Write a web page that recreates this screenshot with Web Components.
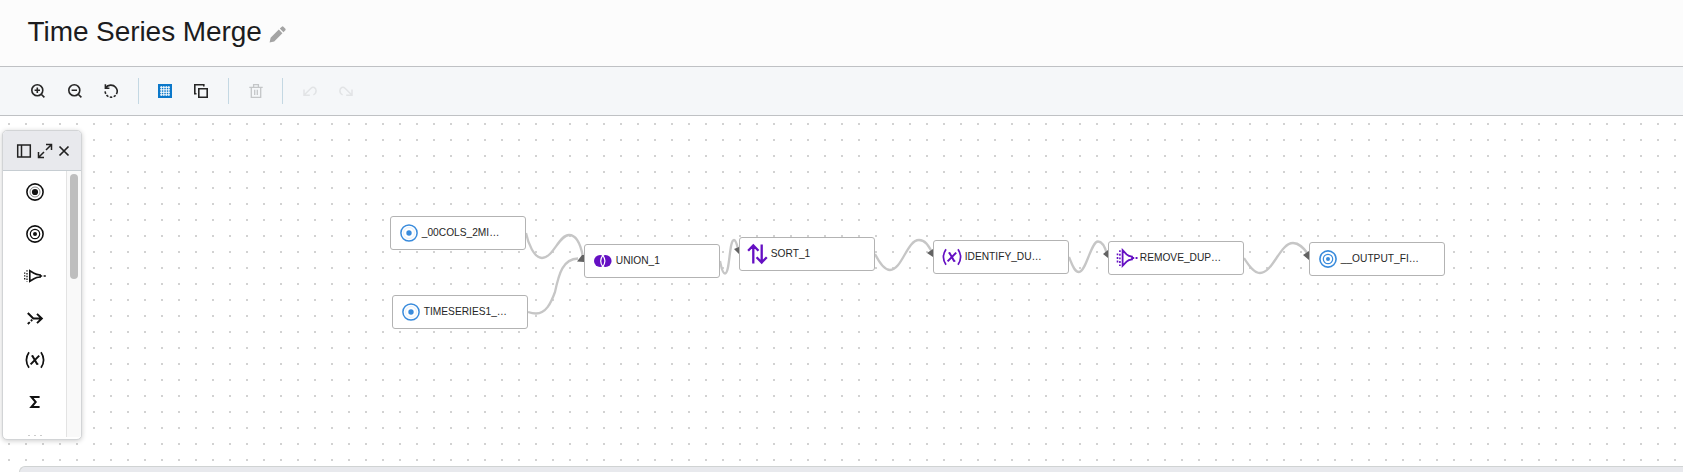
<!DOCTYPE html>
<html lang="en"><head><meta charset="utf-8"><title>Time Series Merge</title>
<style>html,body{margin:0;height:100%;overflow:hidden}body{font-family:"Liberation Sans",Arial,sans-serif;color:#1c1c1e}</style></head>
<body><flow-app></flow-app>
<script>
const ring = '<circle cx="10" cy="10" r="8.1" fill="none" stroke="currentColor" stroke-width="1.6"/>';
const ICONS = {
 edit:[17,'<path d="M0.6 16.4 1.6 11.8 9.8 3.6 13.4 7.2 5.2 15.4ZM10.8 2.6 12.8.7Q13.6 0 14.4.7L16.4 2.7Q17 3.4 16.4 4.2L14.4 6.2Z" fill="currentColor"/>'],
 zoomin:[14,'<g fill="none" stroke="currentColor" stroke-width="1.6"><circle cx="6.3" cy="6.3" r="5.5"/><path d="M10.2 10.2 13.4 13.4M3.6 6.3H9M6.3 3.6V9"/></g>'],
 zoomout:[14,'<g fill="none" stroke="currentColor" stroke-width="1.6"><circle cx="6.3" cy="6.3" r="5.5"/><path d="M10.2 10.2 13.4 13.4M3.6 6.3H9"/></g>'],
 reset:[14,'<g fill="none" stroke="currentColor" stroke-width="1.6"><path d="M1.4 .2V4.2H5.4M1.7 3.8C4 .4 9 .2 11.6 3.3 13.2 5.2 13.7 8 12.4 10.2"/><path d="M11.6 11.2C8.5 14.6 1.8 14 1 7" stroke-dasharray="2.4 1.5"/></g>'],
 grid:[14,'<path d="M0 0H14V14H0Z" fill="#0b78ca"/><path d="M2 3.3H12M2 5.8H12M2 8.3H12M2 10.8H12M3.3 2V12M5.8 2V12M8.3 2V12M10.8 2V12" stroke="#fff" stroke-width=".95"/>'],
 copy:[14,'<g fill="none" stroke="currentColor" stroke-width="1.6"><path d="M4.8 4.8H13.2V13.2H4.8Z"/><path d="M2.5 9.8H.8V.8H9.8V2.6"/></g>'],
 trash:[14,'<g fill="none" stroke="currentColor" stroke-width="1.3"><path d="M.3 3.3H13.7M4.6 3V.7H9.4V3M2.3 3.6V13.3H11.7V3.6M5.7 5.8V11M8.3 5.8V11"/></g>'],
 undo:[14,'<path d="M1 5.4V11.3H6.8M1.4 10.8 8 4.2C10 2.2 13 3.7 13.1 6.5 13.2 8.5 12 10 10.4 10.8" fill="none" stroke="currentColor" stroke-width="1.5"/>'],
 redo:[14,'<path d="M13 5.4V11.3H7.2M12.6 10.8 6 4.2C4 2.2 1 3.7.9 6.5.8 8.5 2 10 3.6 10.8" fill="none" stroke="currentColor" stroke-width="1.5"/>'],
 dock:[14,'<path d="M.7 .9H13.3V13.1H.7ZM4.5 1V13" fill="none" stroke="currentColor" stroke-width="1.5"/>'],
 expand:[14,'<path d="M8 .5H13.5V6M13.3.7 8 6M.5 8V13.5H6M.7 13.3 6 8" fill="none" stroke="currentColor" stroke-width="1.5"/>'],
 close:[10,'<path d="M.5.5 9.5 9.5M9.5.5.5 9.5" stroke="currentColor" stroke-width="1.7"/>'],
 source:[20,ring+'<circle cx="10" cy="10" r="5" fill="none" stroke="currentColor" stroke-width=".7" opacity=".7"/><circle cx="10" cy="10" r="3.1" fill="currentColor"/>'],
 input:[20,'<circle cx="10" cy="10" r="8.1" fill="none" stroke="currentColor" stroke-width="1.5"/><circle cx="10" cy="10" r="5.5" fill="none" stroke="currentColor" stroke-width=".4" opacity=".35"/><circle cx="10" cy="10" r="2.7" fill="currentColor"/>'],
 target:[20,ring+'<circle cx="10" cy="10" r="4.7" fill="none" stroke="currentColor" stroke-width="1.2"/><circle cx="10" cy="10" r="2" fill="currentColor"/>'],
 filter:[20,'<path d="M5.6 2.2 9.6 6.4Q11.4 8.2 15 8.6V11.4Q11.4 11.8 9.6 13.6L5.6 17.8Z" fill="none" stroke="currentColor" stroke-width="1.8"/><path d="M2.9 2.2V18M.5 5.4V15" stroke="currentColor" stroke-width="1.6" stroke-dasharray="1.9 1.7"/><path d="M15 10H20.5" stroke="currentColor" stroke-width="1.9" stroke-dasharray="2.2 1.4"/>'],
 select:[20,'<path d="M4.8 4.7 9 7.3Q11.4 8.8 15.2 9V11Q11.4 11.2 9 12.7L4.8 15.3Z" fill="none" stroke="currentColor" stroke-width="1.6"/><path d="M2 4.2V16M-.3 6.4V14" stroke="currentColor" stroke-width="1.3" stroke-dasharray="1.4 1.4"/><path d="M15 10H20.8" stroke="currentColor" stroke-width="1.7" stroke-dasharray="2.2 1.4"/>'],
 merge:[20,'<path d="M2.8 5 8.3 10.5H16.8M12 5.9 16.8 10.5 12 15.1M2.8 16 4.8 14.1M5.9 13 7.2 11.8" fill="none" stroke="currentColor" stroke-width="2"/>'],
 expr:[20,'<path d="M4 2.2Q-1.2 10 4 17.8M16 2.2Q21.2 10 16 17.8" fill="none" stroke="currentColor" stroke-width="1.7"/><path d="M7.2 5.4 12.4 14.6M14.2 5.6 5.6 14.4" fill="none" stroke="currentColor" stroke-width="2"/><path d="M6.6 5.9H8M12 14.1H13.4" stroke="currentColor" stroke-width="1.2"/>'],
 sum:[20,'<path d="M14.6 5H6.4L10.7 10 6.4 15H14.6" fill="none" stroke="currentColor" stroke-width="2"/>'],
 union:[20,'<circle cx="7.1" cy="10" r="6.1" fill="currentColor"/><circle cx="12.5" cy="10" r="6.1" fill="currentColor"/><path d="M9.8 4.4Q5.6 10 9.8 15.6 14 10 9.8 4.4Z" fill="currentColor" stroke="#fff" stroke-width="1.2"/><path d="M9.8 3.5V5M9.8 15V16.5" stroke="#fff" stroke-width="1.4"/>'],
 sort:[20,'<path d="M5.3 19.5V1.7M.1 6.8 5.3 1.5 10.5 6.8M13.7.5V18.3M8.6 13.2 13.7 18.5 18.8 13.2" fill="none" stroke="currentColor" stroke-width="2.3"/>']
};
function define(name,render){customElements.define(name,class extends HTMLElement{
 constructor(){super();this.attachShadow({mode:'open'})}
 connectedCallback(){const t=document.createElement('template');t.innerHTML=render(this);this.shadowRoot.replaceChildren(t.content.cloneNode(true))}
})}
define('flow-icon',e=>{const[v,p]=ICONS[e.getAttribute('name')];
 return `<style>:host{display:block;flex:none}svg{display:block;overflow:visible}</style><svg width="${v}" height="${v}" viewBox="0 0 ${v} ${v}">${p}</svg>`});
define('flow-title',()=>`<style>:host{display:flex;box-sizing:border-box;height:67px;padding:0 27.5px;align-items:center;gap:7px;background:#fcfcfc;border-bottom:1px solid #bfc1c4}
 h1{font-weight:400;font-size:28px;letter-spacing:-.07px;line-height:32px;margin:-3px 0 0;width:234px;white-space:nowrap}flow-icon{color:#a4a4a4;margin-top:2px}</style><h1><slot></slot></h1><flow-icon name="edit"></flow-icon>`);
define('flow-toolbar',()=>`<style>:host{display:flex;box-sizing:border-box;height:49px;padding-left:31px;align-items:center;background:#f5f7f9;border-bottom:1px solid #bfc1c4;color:#262626}
 flow-icon{margin-right:22.5px}i{width:1px;height:26px;background:#c4d8e3;margin-right:20px}.off{color:#c4c6c8}.faint{color:#e2e4e6;margin-right:22px}</style>
 <flow-icon name="zoomin"></flow-icon><flow-icon name="zoomout"></flow-icon><flow-icon name="reset" style="margin-right:20px"></flow-icon><i style="margin-right:19px"></i>
 <flow-icon name="grid" style="margin-right:22px"></flow-icon><flow-icon name="copy" style="margin-right:20px"></flow-icon><i></i><flow-icon class="off" name="trash" style="margin-right:19px"></flow-icon><i></i>
 <flow-icon class="faint" name="undo"></flow-icon><flow-icon class="faint" name="redo"></flow-icon>`);
define('flow-node',e=>`<style>:host{display:flex;box-sizing:border-box;width:136px;height:34px;border:1px solid #b3b3b3;border-radius:3px;background:#fff;align-items:center;padding:0 0 1px 7.6px;font-size:10.2px;color:#262626}
 flow-icon{color:var(--ink)}span{margin-left:3.2px;white-space:nowrap;line-height:11px}</style><flow-icon name="${e.getAttribute('icon')}"></flow-icon><span><slot></slot></span>`);
define('flow-palette',()=>`<style>:host{display:flex;flex-direction:column;box-sizing:border-box;width:80px;height:310px;border:1px solid #d2d4d6;border-radius:5px;background:#fff;box-shadow:0 1px 5px #0003;overflow:hidden;color:#111}
 header{height:39px;flex:none;display:flex;align-items:center;background:#e8e9ed;border-bottom:1px solid #c6cdd2;padding-left:14px;gap:7px;color:#222}
 main{display:flex;height:266px}.list{width:63px;display:flex;flex-direction:column;align-items:center;padding-top:11px;gap:22.1px;overflow:hidden;box-sizing:border-box}
 .bar{width:15px;border-left:1px solid #e3e3e3;background:#f9f9f9;padding:3px 0 0 3px;box-sizing:border-box}.bar b{display:block;width:8px;height:105px;border-radius:4px;background:#bebebe}
 .more{display:flex;justify-content:space-between;width:14px;height:1px;flex:none}.more i{width:2px;background:#ccc}</style>
 <header><flow-icon name="dock"></flow-icon><flow-icon name="expand"></flow-icon><flow-icon name="close"></flow-icon></header>
 <main><div class="list">${['source','target','select','merge','expr','sum'].map(n=>`<flow-icon name="${n}"></flow-icon>`).join('')}<div class="more"><i></i><i></i><i></i></div></div><div class="bar"><b></b></div></main>`);
define('flow-canvas',()=>{
 const nodes=[[390,216,'input','_00COLS_2MI…'],[392,295,'input','TIMESERIES1_…'],[584,244,'union','UNION_1'],[739,237,'sort','SORT_1'],[933,240,'expr','IDENTIFY_DU…'],[1108,241,'filter','REMOVE_DUP…'],[1309,242,'target','__OUTPUT_FI…']];
 const blue=new Set(['input','target']);
 return `<style>:host{display:block;position:relative;height:356px;overflow:hidden;background:#fff}
 svg{position:absolute;inset:0}flow-node,flow-palette,footer{position:absolute}flow-palette{left:2px;top:14px}
 footer{left:19px;right:0;bottom:0;height:6px;box-sizing:border-box;background:#e8e9ed;border-top:1px solid #d0d3d3;border-left:1px solid #d0d3d3;border-radius:6px 0 0 0}</style>
 <svg width="1683" height="356" viewBox="0 116 1683 356"><defs><pattern id="d" x="8" y="123" width="17" height="16" patternUnits="userSpaceOnUse"><path d="M0 0H2V2H0Z" fill="#d2d2d2"/></pattern></defs><path d="M0 116H1683V472H0Z" fill="url(#d)"/>
 <g fill="none" stroke="#c6c6c6" stroke-width="2.3"><path d="M526 233C528 243 534 258 542 258C553 258 559 235 569 235C577 235 581 246 583 257"/><path d="M528 312C531 313 533 313.5 536 313.5C546 313.5 551 303 555 292C559 273 563 259 578 258.5"/>
 <path d="M720 261C721 265 722 273.5 725 273.5C730 273.5 729 240 734 240C736 240 737 245 738 249"/><path d="M875 254C879 262 884 270 890 270C902 270 907 240 919 240C925 240 928 245 932 252"/>
 <path d="M1069 257C1072 264 1074 272 1079 272C1086 272 1091 241.5 1098 241.5C1102 241.5 1105 247 1107 254"/><path d="M1244 258C1249 266 1254 273 1260 273C1273 273 1280 243 1293 243C1299 243 1303 247 1308 254"/></g>
 <g fill="#626262"><path d="M577 261.5 582 255H584V262ZM734 249 739 247V254ZM927 253 933 249V257ZM1103 254 1108 250V258ZM1303 255 1309 251V260Z"/></g></svg>
 ${nodes.map(([x,y,i,t])=>`<flow-node icon="${i}" style="left:${x}px;top:${y-116}px;--ink:${blue.has(i)?'#398bdc':'#650fc3'}">${t}</flow-node>`).join('')}
 <flow-palette></flow-palette><footer></footer>`});
define('flow-app',()=>`<style>:host{display:flex;flex-direction:column;height:472px;overflow:hidden}</style><flow-title>Time Series Merge</flow-title><flow-toolbar></flow-toolbar><flow-canvas></flow-canvas>`);
</script></body></html>
